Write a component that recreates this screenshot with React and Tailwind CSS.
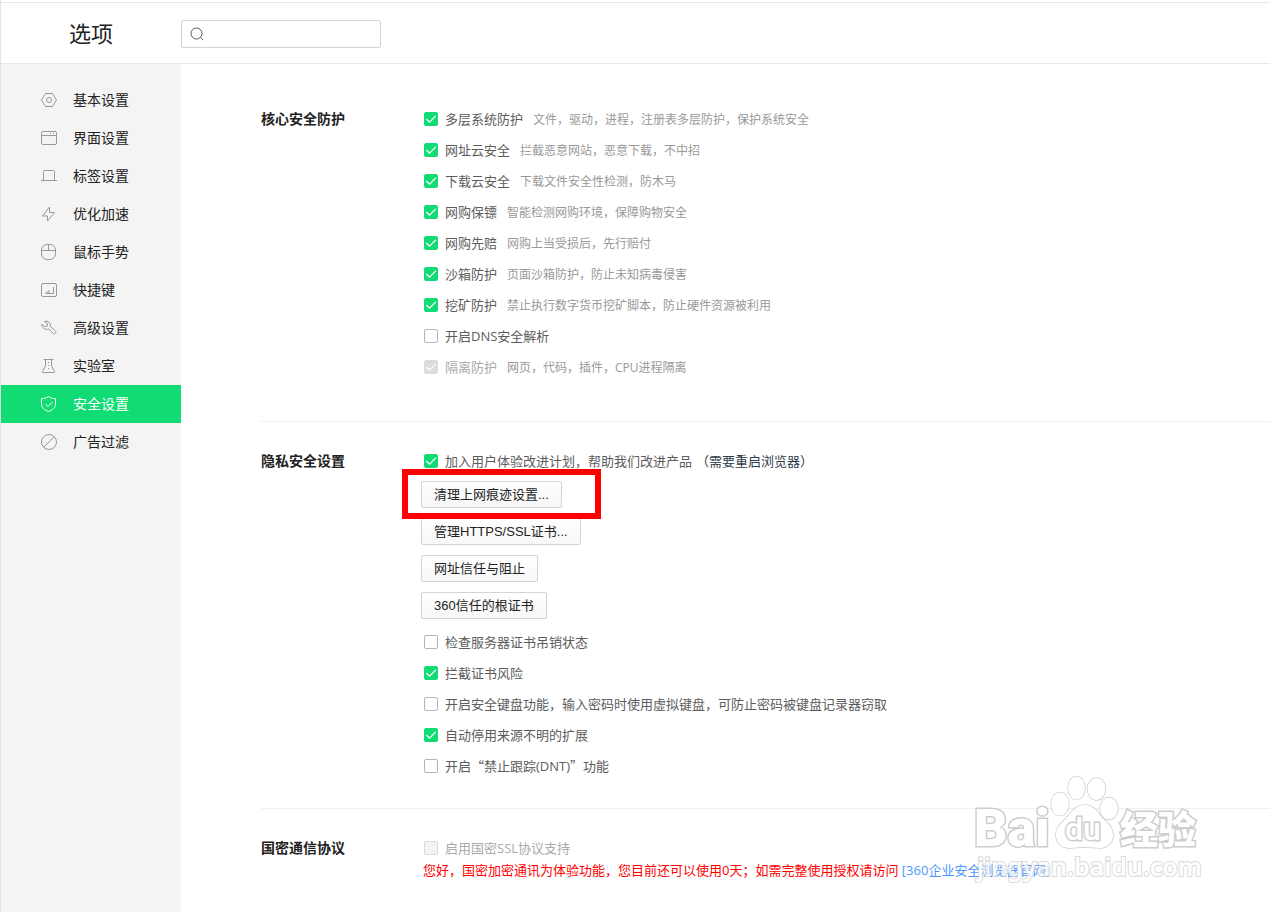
import React, { useState } from "react";

const icons = {
  basic: (
    <>
      <path d="M4.5 1.5h7L15.5 8l-4 6.5h-7L.5 8z" />
      <circle cx="8" cy="8" r="2.5" />
    </>
  ),
  ui: (
    <>
      <rect x=".5" y="1.5" width="15" height="13" rx="1.5" />
      <path d="M.5 5.5h15M9 3.5h1M12 3.5h1" />
    </>
  ),
  tab: <path d="M0 12.5h16M2.5 12.5v-9a1 1 0 0 1 1-1h9a1 1 0 0 1 1 1v9" />,
  speed: <path d="M8.5 1v5.500h5L6.500 15V10H1.500z" />,
  mouse: (
    <>
      <rect x=".5" y=".5" width="14" height="15" rx="5.5" />
      <path d="M.5 6.5h14M7.5.5v6" />
    </>
  ),
  shortcut: (
    <>
      <rect x=".5" y="1.5" width="15" height="13" rx="1.5" />
      <path d="M12.5 5v6.5h-8L8 8.500v3" />
    </>
  ),
  advanced: (
    <path d="M3.500 1.500C7 .3 10 2.800 9.300 6.300L14.300 11c1.500 1.600-.6 3.900-2.300 2.300L7.800 9C4 10.300.3 7.500.8 4l3 2.700 2.500-.7.400-2.200z" />
  ),
  lab: (
    <>
      <path d="M2.500 1.500h10M4.500 1.500v6.500L1.300 13.500c-.3.600 0 1 .6 1h11.200c.6 0 .9-.4.600-1L10.500 8V1.500" />
      <path d="M7.500 4v1M7.500 7v1M7.500 10v1" />
    </>
  ),
  security: (
    <>
      <path d="M7.5.6c2 1.400 4.200 2 7 2v5.600c0 3.500-3 5.800-7 7.300-4-1.500-7-3.800-7-7.300V2.600c2.800 0 5-.6 7-2z" />
      <path d="M4.500 8L7 10.500 11.500 6" />
    </>
  ),
  ads: (
    <>
      <circle cx="8" cy="8" r="7.500" />
      <path d="M13.300 2.700L2.700 13.300" />
    </>
  ),
};

const menu = [
  { icon: "basic", label: "基本设置" },
  { icon: "ui", label: "界面设置" },
  { icon: "tab", label: "标签设置" },
  { icon: "speed", label: "优化加速" },
  { icon: "mouse", label: "鼠标手势" },
  { icon: "shortcut", label: "快捷键" },
  { icon: "advanced", label: "高级设置" },
  { icon: "lab", label: "实验室" },
  { icon: "security", label: "安全设置" },
  { icon: "ads", label: "广告过滤" },
];

const coreOptions = [
  { label: "多层系统防护", desc: "文件，驱动，进程，注册表多层防护，保护系统安全", checked: true },
  { label: "网址云安全", desc: "拦截恶意网站，恶意下载，不中招", checked: true },
  { label: "下载云安全", desc: "下载文件安全性检测，防木马", checked: true },
  { label: "网购保镖", desc: "智能检测网购环境，保障购物安全", checked: true },
  { label: "网购先赔", desc: "网购上当受损后，先行赔付", checked: true },
  { label: "沙箱防护", desc: "页面沙箱防护，防止未知病毒侵害", checked: true },
  { label: "挖矿防护", desc: "禁止执行数字货币挖矿脚本，防止硬件资源被利用", checked: true },
  { label: "开启DNS安全解析" },
  { label: "隔离防护", desc: "网页，代码，插件，CPU进程隔离", checked: true, disabled: true },
];

const Cjk = ({ children }) => (
  <span className="font-['Noto_Sans_CJK_SC',sans-serif]">{children}</span>
);

const privacyOptions = [
  { label: "检查服务器证书吊销状态" },
  { label: "拦截证书风险", checked: true },
  { label: "开启安全键盘功能，输入密码时使用虚拟键盘，可防止密码被键盘记录器窃取" },
  { label: "自动停用来源不明的扩展", checked: true },
  { label: <>开启<Cjk>“</Cjk>禁止跟踪(DNT)<Cjk>”</Cjk>功能</> },
];

function Option({ label, desc, note, checked = false, disabled = false }) {
  const [on, setOn] = useState(checked);

  return (
    <label className="flex items-center h-5 pl-[3px] whitespace-nowrap">
      <span className="relative w-3.5 h-3.5 shrink-0">
        <input
          type="checkbox"
          checked={on}
          disabled={disabled}
          onChange={(e) => setOn(e.target.checked)}
          className="peer block appearance-none w-3.5 h-3.5 rounded-xs border border-[#b4b4b4] bg-white checked:border-[#11dc74] checked:bg-[#11dc74] disabled:border-[#dcdcdc] disabled:bg-[#f4f4f4] disabled:checked:border-[#dcdcdc] disabled:checked:bg-[#dcdcdc]"
        />
        <svg
          viewBox="0 0 14 14"
          className="absolute inset-0 w-3.5 h-3.5 hidden peer-checked:block pointer-events-none"
          fill="none"
          stroke="#fff"
          strokeWidth="1.3"
        >
          <path d="M2.300 7l3.200 3.200L11.800 3.900" />
        </svg>
      </span>
      <span className={`ml-[7px] ${disabled ? "text-[#aaa]" : "text-[#5c5c5c]"}`}>{label}</span>
      {note && <span className="ml-1 text-[#2f3b4c]">{note}</span>}
      {desc && <span className="ml-2.5 pt-0.5 text-xs leading-5 text-[#999]">{desc}</span>}
    </label>
  );
}

function PlainButton({ children }) {
  return (
    <button
      type="button"
      className="h-[27px] px-3 rounded-xs border border-[#d4d4d4] bg-linear-to-b from-white to-[#f7f7f7] text-[#222] font-['Liberation_Sans','Noto_Sans_CJK_SC',sans-serif] whitespace-nowrap"
    >
      {children}
    </button>
  );
}

function Section({ title, className, children }) {
  return (
    <section className={`flex ${className}`}>
      <h2 className="w-40 shrink-0 text-sm leading-5 font-bold text-[#222]">{title}</h2>
      <div className="flex-1 min-w-0">{children}</div>
    </section>
  );
}

function Watermark() {
  return (
    <svg
      width="270"
      height="130"
      viewBox="0 0 270 130"
      className="absolute right-[50px] bottom-[17px] pointer-events-none"
      fill="#fff"
      stroke="#cdcdcd"
      strokeWidth="1.5"
      paintOrder="stroke"
    >
      <ellipse cx="110" cy="39" rx="9" ry="11.5" />
      <ellipse cx="126.5" cy="23" rx="8.5" ry="11.5" />
      <ellipse cx="146.5" cy="24" rx="9" ry="11" />
      <ellipse cx="159" cy="43.5" rx="9" ry="11" />
      <path d="M135 40c8 0 12 6 16 11 4 6 12 9 12 19 0 8-6 13-13 13-5 0-9-1-15-1s-10 1-15 1c-8 0-14-5-14-13 0-10 8-13 12-19 4-5 9-11 17-11z" />
      <g strokeWidth="3">
        <text x="24" y="81" fontFamily="Roboto" fontWeight="900" fontSize="52">Bai</text>
        <text x="115" y="75" fontFamily="Roboto" fontWeight="500" fontSize="32">du</text>
        <text x="170" y="78" fontFamily="Noto Sans CJK SC" fontWeight="900" fontSize="38">经验</text>
      </g>
      <text x="27" y="111" fontFamily="Noto Sans" fontWeight="600" fontSize="25" strokeWidth="2" opacity=".7">
        jingyan.baidu.com
      </text>
    </svg>
  );
}

export default function App() {
  const [active, setActive] = useState("security");

  return (
    <div className="relative flex flex-col min-h-screen pt-0.5 bg-white border-l border-[#e5e5e5] overflow-hidden text-[13px] leading-5 font-['Open_Sans','Noto_Sans_CJK_SC',sans-serif]">
      {/* Header */}
      <header className="flex items-center h-[62px] pt-0.5 border-y border-[#e8e8e8]">
        <h1 className="w-[180px] shrink-0 pl-17 pb-0.5 text-[22px] leading-8 text-[#222]">选项</h1>
        <div className="flex items-center w-[200px] h-7 pl-2 border border-[#d4d4d4] rounded-xs">
          <svg width="14" height="14" viewBox="0 0 14 14" fill="none" stroke="#555">
            <circle cx="6.500" cy="6.500" r="5.500" />
            <path d="M10.400 10.400l2.800 2.800" />
          </svg>
          <input
            type="text"
            aria-label="搜索"
            className="flex-1 min-w-0 h-full px-2 bg-transparent outline-none"
          />
        </div>
      </header>

      <div className="flex flex-1">
        {/* Sidebar */}
        <nav className="w-[180px] shrink-0 pt-[17px] bg-[#f4f4f4]">
          {menu.map((item) => (
            <a
              key={item.icon}
              href={`#${item.icon}`}
              onClick={() => setActive(item.icon)}
              className={`flex items-center gap-4 h-[38px] pl-10 text-sm ${
                active === item.icon ? "bg-[#11dc74] text-white" : "text-[#222]"
              }`}
            >
              <svg
                width="16"
                height="16"
                viewBox="0 0 16 16"
                fill="none"
                stroke={active === item.icon ? "#fff" : "#999"}
              >
                {icons[item.icon]}
              </svg>
              {item.label}
            </a>
          ))}
        </nav>

        {/* Settings */}
        <main className="flex-1 min-w-0 pl-20">
          <Section title="核心安全防护" className="pt-[45px] pb-11 border-b border-[#f0f0f0]">
            <div className="flex flex-col items-start gap-[11px]">
              {coreOptions.map((o) => (
                <Option key={o.label} {...o} />
              ))}
            </div>
          </Section>

          <Section title="隐私安全设置" className="pt-[29px] pb-8 border-b border-[#f0f0f0]">
            <Option
              label="加入用户体验改进计划，帮助我们改进产品"
              note="（需要重启浏览器）"
              checked
            />
            <div className="flex flex-col items-start gap-2.5 pt-2.5 pb-[13px]">
              <div className="relative z-10 flex">
                <PlainButton>清理上网痕迹设置...</PlainButton>
                <div className="absolute -left-[19px] -top-3 w-[199px] h-[50px] border-6 border-[#ff0000] pointer-events-none"></div>
              </div>
              <PlainButton>管理HTTPS/SSL证书...</PlainButton>
              <PlainButton>网址信任与阻止</PlainButton>
              <PlainButton>360信任的根证书</PlainButton>
            </div>
            <div className="flex flex-col items-start gap-[11px]">
              {privacyOptions.map((o, i) => (
                <Option key={i} {...o} />
              ))}
            </div>
          </Section>

          <Section title="国密通信协议" className="pt-[29px] pb-8">
            <Option label="启用国密SSL协议支持" disabled />
            <p className="pt-0.5 pl-0.5 text-[#ff0000] whitespace-nowrap">
              您好，国密加密通讯为体验功能，您目前还可以使用0天；如需完整使用授权请访问{" "}
              <a href="#site" className="text-[#4a98ff]">[360企业安全浏览器官网]</a>
            </p>
          </Section>
        </main>
      </div>

      <Watermark />
    </div>
  );
}
